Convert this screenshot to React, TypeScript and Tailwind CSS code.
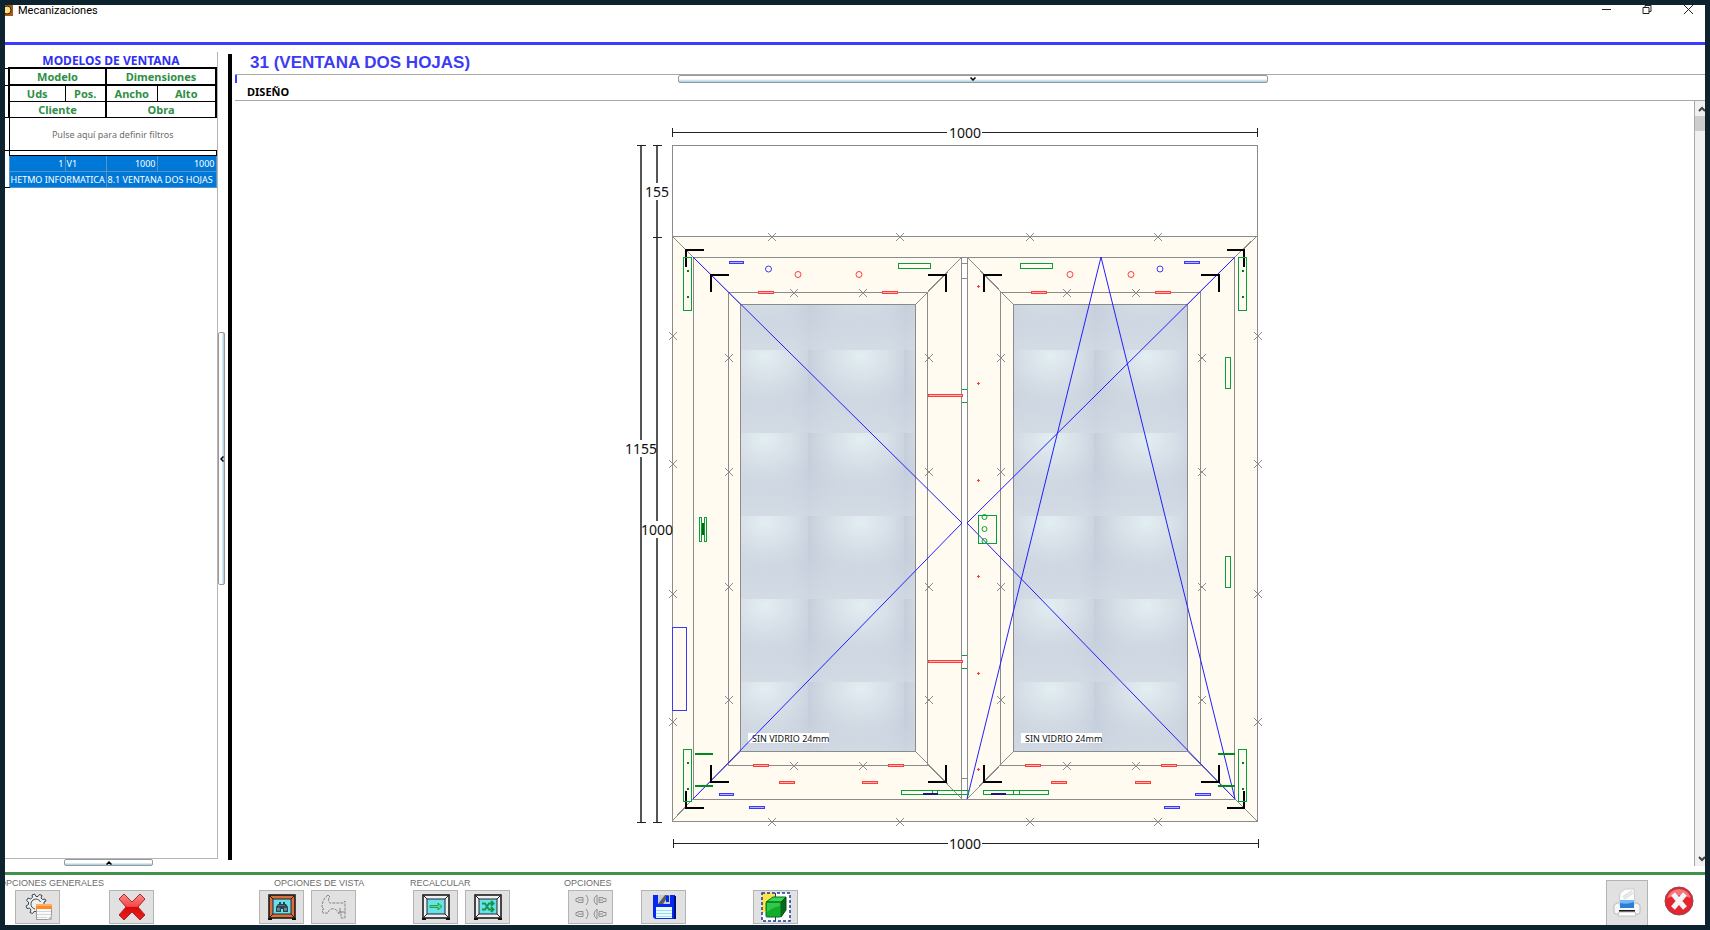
import type { ReactNode } from 'react'
import { clsx } from 'clsx'

type Point = [number, number]
type Box = [x: number, y: number, width: number, height: number]

const GREY = '#8b8b8b'
const GREEN = '#06a038'
const BLUE = '#3a3aff'
const RED = '#ff3b3b'

const crosses: Point[] = [
  // marco
  ...[772, 900, 1030, 1158].flatMap((x): Point[] => [[x, 237], [x, 822]]),
  ...[336, 464, 594, 722].flatMap((y): Point[] => [[673, y], [1258, y]]),
  // hojas
  ...[358, 472, 587, 700].flatMap((y): Point[] => [[729, y], [929, y], [1001, y], [1202, y]]),
  ...[794, 863, 1067, 1136].flatMap((x): Point[] => [[x, 293], [x, 766]]),
]

const corners = [
  'M686 267V250H704', 'M1227 250H1244V267', 'M686 791V808H704', 'M1227 808H1244V791',
  'M711 292V275H729', 'M928 275H946V292', 'M711 765V782H729', 'M928 782H946V765',
  'M984 292V275H1002', 'M1201 275H1219V292', 'M984 765V782H1002', 'M1201 782H1219V765',
]

const greenBoxes: Box[] = [
  [683, 257, 8, 53], [1238, 257, 8, 53], [683, 749, 8, 52], [1238, 749, 8, 52],
  [898, 263, 32, 5], [1020, 263, 32, 5],
  [1225, 357, 5, 31], [1225, 556, 5, 31],
  [699, 517, 2, 24], [704, 517, 2, 24],
  [978, 515, 18, 28],
  [901, 790, 67, 4], [932, 790, 5, 4],
  [983, 790, 65, 4], [1013, 790, 6, 4],
]

const redBoxes: Box[] = [
  [758, 291, 15, 2], [882, 291, 15, 2], [1031, 291, 15, 2], [1155, 291, 15, 2],
  [753, 764, 15, 2], [888, 764, 15, 2], [1025, 764, 15, 2], [1161, 764, 15, 2],
  [779, 781, 15, 2], [862, 781, 15, 2], [1051, 781, 15, 2], [1135, 781, 15, 2],
  [928, 394, 34, 2], [928, 660, 34, 2],
]

const blueBoxes: Box[] = [
  [729, 261, 14, 2], [1184, 261, 15, 2],
  [719, 793, 14, 2], [1195, 793, 15, 2],
  [749, 806, 15, 2], [1164, 806, 15, 2],
]

const hojas = [
  { id: 'izq', x: 693, right: 962, innerX: 728, innerRight: 928, glassX: 740, glassRight: 916, labelX: 748 },
  { id: 'der', x: 967, right: 1235, innerX: 1000, innerRight: 1201, glassX: 1013, glassRight: 1188, labelX: 1021 },
]

function Boxes({ items, stroke, fill = 'none' }: { items: Box[]; stroke: string; fill?: string }) {
  return (
    <g fill={fill} stroke={stroke} strokeWidth="1">
      {items.map(([x, y, width, height]) => (
        <rect key={`${x}-${y}`} x={x + 0.5} y={y + 0.5} width={width} height={height} />
      ))}
    </g>
  )
}

function Vidrio({ id, x }: { id: string; x: number }) {
  return (
    <pattern id={id} x={x} y="350" width="96" height="83" patternUnits="userSpaceOnUse">
      <rect width="96" height="83" fill="#d2dae4" />
      <rect width="96" height="83" fill="url(#sombra)" />
      <rect width="96" height="83" fill="url(#tinte)" />
      <rect width="96" height="83" fill="url(#brillo)" />
    </pattern>
  )
}

function Plano() {
  return (
    <svg
      viewBox="621 101 688 764"
      className="h-[764px] w-[688px] shrink-0"
      shapeRendering="crispEdges"
      role="img"
      aria-label="Plano de la ventana de dos hojas"
    >
      <defs>
        <linearGradient id="sombra">
          <stop offset="0" stopColor="#b8c3d3" stopOpacity="0.6" />
          <stop offset="0.35" stopColor="#d2d9e3" stopOpacity="0" />
          <stop offset="0.75" stopColor="#d2d9e3" stopOpacity="0" />
          <stop offset="1" stopColor="#c0cbd9" stopOpacity="0.7" />
        </linearGradient>
        <linearGradient id="tinte" x2="0" y2="1">
          <stop offset="0" stopColor="#bcc7d6" stopOpacity="0.4" />
          <stop offset="1" stopColor="#d4dbe5" stopOpacity="0.7" />
        </linearGradient>
        <radialGradient id="brillo" cx="0.55" cy="0.08" r="0.65">
          <stop offset="0" stopColor="#e2eff2" />
          <stop offset="0.4" stopColor="#dde4eb" stopOpacity="0.8" />
          <stop offset="1" stopColor="#d3dae4" stopOpacity="0" />
        </radialGradient>
        <Vidrio id="vidrio-izq" x={808} />
        <Vidrio id="vidrio-der" x={1094} />
      </defs>

      {/* Cajón de persiana y marco */}
      <rect x="672.5" y="145.5" width="585" height="91" fill="#fff" stroke={GREY} />
      <rect x="672.5" y="236.5" width="585" height="585" fill="#fffbf0" stroke={GREY} />
      <path d="M672 236L693 257M1257 236L1235 257M672 821L693 799M1257 821L1235 799" stroke={GREY} />
      <path d="M693 257.5H1235M693 799.5H1235" stroke={GREY} />
      <rect x="962" y="258" width="5" height="541" fill="#fff" />
      <path d="M962 263.5H967M962 278.5H967M962 778.5H967" stroke={GREY} />

      {/* Hojas */}
      {hojas.map((h) => (
        <g key={h.id} stroke={GREY} fill="none">
          <rect x={h.x + 0.5} y="257.5" width={h.right - h.x - 1} height="542" />
          <path
            d={`M${h.x} 257L${h.glassX} 304M${h.right} 257L${h.glassRight} 304M${h.x} 799L${h.glassX} 752M${h.right} 799L${h.glassRight} 752`}
          />
          <rect x={h.innerX + 0.5} y="292.5" width={h.innerRight - h.innerX - 1} height="473" />
          <rect
            x={h.glassX + 0.5}
            y="304.5"
            width={h.glassRight - h.glassX - 1}
            height="447"
            fill={`url(#vidrio-${h.id})`}
          />
          <rect x={h.labelX} y="733" width="81" height="10" fill="#fff" stroke="none" />
          <text x={h.labelX + 4} y="742" fill="#111" stroke="none" className="font-['Noto_Sans',sans-serif] text-[9px]">
            SIN VIDRIO 24mm
          </text>
        </g>
      ))}

      {/* Sentido de apertura */}
      <g fill="none" stroke="#2020ff" shapeRendering="auto">
        <path d="M693 257L962 523L693 799" />
        <path d="M1235 257L967 523L1235 799" />
        <path d="M967 799L1101 257L1235 799" />
      </g>

      {/* Mecanizados */}
      <path d={crosses.map(([x, y]) => `M${x - 4} ${y - 4}l8 8m0 -8l-8 8`).join('')} stroke={GREY} shapeRendering="auto" />
      <path d={corners.join('')} stroke="#000" strokeWidth="2" fill="none" />
      <Boxes items={greenBoxes} stroke={GREEN} />
      <Boxes items={redBoxes} stroke={RED} fill="#ffb4b0" />
      <Boxes items={blueBoxes} stroke={BLUE} fill="#b4b4ff" />
      <rect x="672.5" y="627.5" width="14" height="83" fill="none" stroke={BLUE} />
      <path d="M695 754H713M695 786H713M1218 754H1235M1218 786H1235" stroke="#008a1c" strokeWidth="2" />
      <path d="M962 389.5H967M962 402.5H967M962 655.5H967M962 668.5H967" stroke={GREEN} />
      <path d="M703 523V535" stroke="#006a10" strokeWidth="2" />
      <path d="M923 794H938M991 794H1006" stroke="#18187c" strokeWidth="2" />
      <g fill="#007a20">
        {[687, 1242].flatMap((x) =>
          [270, 296, 762, 788].map((y) => <rect key={`${x}-${y}`} x={x} y={y} width="2" height="2" />),
        )}
      </g>
      <g fill={RED}>
        {[286, 383, 480, 576, 673, 769].map((y) => (
          <path key={y} d={`M977 ${y}h3v1h-3zM978 ${y - 1}h1v3h-1z`} />
        ))}
      </g>
      <g fill="none" shapeRendering="auto">
        <g stroke={RED}>
          {[798, 859, 1070, 1131].map((x) => (
            <circle key={x} cx={x} cy="274.5" r="3" />
          ))}
        </g>
        <g stroke={BLUE}>
          <circle cx="768.5" cy="269" r="3" />
          <circle cx="1160" cy="269" r="3" />
        </g>
        <g stroke={GREEN}>
          {[517, 529, 541].map((y) => (
            <circle key={y} cx="984.5" cy={y} r="2.5" />
          ))}
        </g>
      </g>

      {/* Cotas */}
      <g stroke="#222">
        <path d="M672 132.5H947M982 132.5H1257M672.5 128V137M1257.5 128V137" />
        <path d="M673 843.5H948M982 843.5H1258M673.5 839V848M1258.5 839V848" />
        <path d="M641 145V440M641 457V822M657 145V183M657 200V521M657 538V822" stroke="#555" strokeWidth="2" />
        <path d="M637 145.5H646M637 822.5H646M653 145.5H662M653 237.5H662M653 822.5H662" />
      </g>
      <g fill="#111" textAnchor="middle" className="font-['Noto_Sans',sans-serif] text-[14px]">
        <text x="965" y="138">1000</text>
        <text x="965" y="849">1000</text>
        <text x="657" y="197">155</text>
        <text x="641" y="454">1155</text>
        <text x="657" y="535">1000</text>
      </g>
    </svg>
  )
}

/* Iconos de la barra inferior */

function ConfigIcon() {
  return (
    <svg viewBox="0 0 28 28" className="size-[28px]">
      <g transform="translate(12 11)" fill="none" stroke="#3d4448">
        <path d="M8 0V-2L10 -3L9 -5L6.500 -4.500L5 -6L6 -8.500L3.500 -9.500L2 -7.500H0L-1.500 -10L-4 -9L-3.500 -6.500L-5.500 -5L-8 -6L-9.500 -3.500L-7.500 -2V0.500L-10 2L-9 4.500L-6.500 4L-5 6L-6 8.500L-3.500 9.500L-2 7.500H0" fill="#eef0f1" />
        <path d="M4.500 -2A5 5 0 1 0 -1 5" />
      </g>
      <rect x="12.500" y="11.500" width="15" height="15" fill="#fafafa" stroke="#999" />
      <rect x="12" y="11" width="16" height="5" fill="#ff8b28" />
      <rect x="12" y="11" width="16" height="2" fill="#ffb066" />
      <path d="M13 18.500H27M13 21.500H27M13 24.500H23" stroke="#d5d5d5" />
      <path d="M23 27L28 22V27Z" fill="#b8b8b8" />
    </svg>
  )
}

function DeleteIcon() {
  return (
    <svg viewBox="0 0 28 28" className="size-[28px]">
      <defs>
        <linearGradient id="rojo" x2="0" y2="1">
          <stop offset="0" stopColor="#ff8a8a" />
          <stop offset="0.480" stopColor="#f04848" />
          <stop offset="0.500" stopColor="#d80808" />
          <stop offset="1" stopColor="#f02020" />
        </linearGradient>
      </defs>
      <path d="M6 1L14 9L22 1L27 6L20 14L27 22L22 27L14 19L6 27L1 22L8 14L1 6Z" fill="url(#rojo)" stroke="#a32a2a" strokeLinejoin="round" />
    </svg>
  )
}

function WindowFrame({ color, children }: { color: string; children: ReactNode }) {
  return (
    <svg viewBox="0 0 28 26" className="h-[26px] w-[28px]">
      <rect x="1" y="1" width="26" height="23" fill={color} stroke="#111" strokeWidth="1.500" />
      <path d="M1 1L5 5M27 1L23 5M1 24L5 20M27 24L23 20" stroke="#222" />
      <rect x="5" y="5" width="18" height="15" fill="#68e2ea" stroke="#223" />
      <path d="M0 25H4M24 25H28" stroke="#111" strokeWidth="2" />
      {children}
    </svg>
  )
}

function FindIcon() {
  return (
    <WindowFrame color="#d9703c">
      <path d="M8 13L10 10H11V8H13V10H15V8H17V10H18L20 13V18H15V15H13V18H8Z" fill="#2d4450" />
      <path d="M9.500 14H11.500V16.500H9.500ZM16.500 14H18.500V16.500H16.500ZM10 11.500H17" fill="#5b8790" stroke="#7caab1" strokeWidth="0.500" />
    </WindowFrame>
  )
}

function ArrowIcon() {
  return (
    <WindowFrame color="#f0f0f0">
      <path d="M8 11.500H16V9L20 12.500L16 16V13.500H8Z" fill="#55dd70" stroke="#168a38" strokeWidth="0.750" />
    </WindowFrame>
  )
}

function ShuffleIcon() {
  return (
    <WindowFrame color="#f0f0f0">
      <g fill="none" stroke="#15964a" strokeWidth="2">
        <path d="M8 9.500H11L15 15.500H19M8 15.500H11L15 9.500H19" />
        <path d="M17 7L19.500 9.500L17 12M17 13L19.500 15.500L17 18" />
      </g>
    </WindowFrame>
  )
}

function ProfileIcon() {
  return (
    <svg viewBox="0 0 26 26" className="size-[26px]" fill="none" stroke="#858585">
      <path d="M7 1C3 4 1 8 1 13L3 15L1 16L2 19H7C8 14 14 13 17 18L18 20V18H20V24H24V7L22 9H9C7 8 7 4 9 3Z" strokeDasharray="3 1" />
      <path d="M19 14V18H24" />
    </svg>
  )
}

function ScrewsIcon() {
  return (
    <svg viewBox="0 0 32 26" className="h-[26px] w-[32px]" fill="none" stroke="#909090">
      {[6, 20].map((y) => (
        <g key={y}>
          <path d={`M1 ${y - 1.5}H3V${y - 2.5}H8V${y + 2.5}H3V${y + 1.5}H1ZM3 ${y}H8M11 ${y - 5}Q15 ${y} 11 ${y + 5}`} />
          <path d={`M31 ${y - 1.5}H28V${y - 2.5}H24V${y + 2.5}H28V${y + 1.5}H31ZM24 ${y}H28M22 ${y - 5}Q16 ${y} 22 ${y + 5}M22 ${y - 5}V${y + 5}`} />
        </g>
      ))}
    </svg>
  )
}

function SaveIcon() {
  return (
    <svg viewBox="0 0 24 24" className="size-[24px]">
      <path d="M1 0H23V24H3L1 22Z" fill="#0828ee" />
      <path d="M23 1V24" stroke="#001078" strokeWidth="2" />
      <rect x="6" y="0" width="12" height="9" fill="#c8ccd2" />
      <path d="M6 9L13 0H17L11 9Z" fill="#555b66" />
      <rect x="14" y="1" width="3" height="6" fill="#0828ee" />
      <rect x="4" y="12" width="16" height="11" fill="#e8fbff" />
      <path d="M4 15.500H20M4 18.500H20M4 21.500H20" stroke="#9fdcf2" />
    </svg>
  )
}

function CubeIcon() {
  return (
    <svg viewBox="0 0 30 30" className="size-[30px]">
      <rect x="1" y="1" width="28" height="28" fill="#fff" />
      <path d="M1 1H14V10L1 22Z" fill="#ffe34a" />
      <rect x="1" y="1" width="28" height="28" fill="none" stroke="#1d3a96" strokeWidth="1.500" strokeDasharray="3 2" />
      <path d="M14.500 1V29" stroke="#1d3a96" />
      <path d="M5 10L12 5H25L20 10Z" fill="#35d955" stroke="#087020" />
      <path d="M20 10L25 5V18L20 25Z" fill="#066a1c" stroke="#065018" />
      <rect x="5" y="10" width="15" height="15" rx="1" fill="#0fae2b" stroke="#087020" />
      <path d="M6 11H19V14Q12 15 6 20Z" fill="#4ad865" opacity="0.6" />
    </svg>
  )
}

function PrinterIcon() {
  return (
    <svg viewBox="0 0 30 30" className="size-[30px]">
      <path d="M2 17L5 15H25L28 17V24Q28 26 26 26H4Q2 26 2 24Z" fill="#f7f7f7" stroke="#bbb" />
      <path d="M7 16L8 5L13 1H22L23 16Z" fill="#fcfcfc" stroke="#ccc" />
      <path d="M11 9L20 3M12 11L21 5" stroke="#e2e2e2" strokeWidth="2" />
      <rect x="8" y="12" width="14" height="8" fill="#2c7edb" />
      <path d="M8 12H22V14Q15 17 8 15Z" fill="#74b7f2" />
      <path d="M7 23H23" stroke="#1a1a1a" strokeWidth="2" />
      <path d="M7 24H23L24 28H6Z" fill="#fff" stroke="#c2c2c2" />
    </svg>
  )
}

function ExitIcon() {
  return (
    <svg viewBox="0 0 30 30" className="size-[30px]">
      <circle cx="15" cy="15" r="14" fill="#e62430" stroke="#8c4a4c" />
      <path d="M3 12A12.500 12.500 0 0 1 27 12Q15 7 3 12Z" fill="#f58d92" opacity="0.8" />
      <path d="M9 8L21 22M21 8L9 22" stroke="#f5f5f5" strokeWidth="5" />
    </svg>
  )
}

function ToolButton({ label, children }: { label: string; children: ReactNode }) {
  return (
    <button
      type="button"
      aria-label={label}
      className="flex h-[34px] w-[45px] items-center justify-center border border-[#b4b4b4] bg-[#e1e1e1]"
    >
      {children}
    </button>
  )
}

function ToolGroup({ title, className, rowClassName, children }: {
  title: string
  className?: string
  rowClassName: string
  children: ReactNode
}) {
  return (
    <section className={clsx('flex flex-col pt-[1px]', className)}>
      <h2 className="whitespace-nowrap font-['Liberation_Sans',sans-serif] text-[9px] leading-[14px] text-[#6b6b6b]">
        {title}
      </h2>
      <div className={clsx('flex', rowClassName)}>{children}</div>
    </section>
  )
}

function Toolbar() {
  return (
    <footer className="flex h-[53px] shrink-0 overflow-hidden border-t-[3px] border-[#43924a]">
      <ToolGroup title="OPCIONES GENERALES" className="-ml-[6px] w-[261px]" rowClassName="gap-[49px] pl-[16px]">
        <ToolButton label="Configuración"><ConfigIcon /></ToolButton>
        <ToolButton label="Eliminar"><DeleteIcon /></ToolButton>
      </ToolGroup>
      <ToolGroup title="OPCIONES DE VISTA" className="w-[150px] pl-[14px]" rowClassName="-ml-[15px] gap-[7px]">
        <ToolButton label="Ver ventana"><FindIcon /></ToolButton>
        <ToolButton label="Ver perfil"><ProfileIcon /></ToolButton>
      </ToolGroup>
      <ToolGroup title="RECALCULAR" className="w-[154px]" rowClassName="gap-[7px] pl-[3px]">
        <ToolButton label="Recalcular"><ArrowIcon /></ToolButton>
        <ToolButton label="Recalcular todo"><ShuffleIcon /></ToolButton>
      </ToolGroup>
      <ToolGroup title="OPCIONES" rowClassName="pl-[4px]">
        <ToolButton label="Tornillos"><ScrewsIcon /></ToolButton>
        <div className="ml-[28px]"><ToolButton label="Guardar"><SaveIcon /></ToolButton></div>
        <div className="ml-[67px]"><ToolButton label="Vista 3D"><CubeIcon /></ToolButton></div>
      </ToolGroup>
      <div className="ml-auto flex gap-[16px] pr-[11px]">
        <button
          type="button"
          aria-label="Imprimir"
          className="mt-[5px] flex h-[46px] w-[42px] items-center justify-center border border-[#b4b4b4] bg-[#e1e1e1]"
        >
          <PrinterIcon />
        </button>
        <button type="button" aria-label="Salir" className="flex items-center pt-[2px]">
          <ExitIcon />
        </button>
      </div>
    </footer>
  )
}

function TitleBar() {
  return (
    <header className="flex h-[40px] shrink-0 items-start justify-between border-b-[3px] border-[#3c3cff]">
      <div className="flex h-[11px] items-center gap-[5px]">
        <svg viewBox="0 0 8 11" className="h-[11px] w-[8px]">
          <rect width="8" height="11" fill="#a5591c" />
          <circle cx="2" cy="5" r="4" fill="#ffe27a" stroke="#3d2208" />
        </svg>
        <h1 className="font-['Roboto',sans-serif] text-[11px] leading-[11px] text-black">Mecanizaciones</h1>
      </div>
      <div className="flex gap-[7px]">
        {[
          { label: 'Minimizar', d: 'M1 4.500H10' },
          { label: 'Restaurar', d: 'M1 2.500H7V8.500H1ZM3 2V0.500H9V6.500H7' },
          { label: 'Cerrar', d: 'M1 0L10 9M10 0L1 9' },
        ].map(({ label, d }) => (
          <button key={label} type="button" aria-label={label} className="flex w-[34px] justify-center">
            <svg viewBox="0 0 11 10" className="h-[10px] w-[11px]" fill="none" stroke="#222">
              <path d={d} />
            </svg>
          </button>
        ))}
      </div>
    </header>
  )
}

function ModelTable() {
  const head = 'h-[16px] overflow-hidden border border-black p-0 text-center text-[11px] font-bold text-[#2f8f46]'
  const data = 'h-[16px] overflow-hidden whitespace-nowrap border border-[#5a93c4] p-0 px-[1px]'

  return (
    <table className="w-full table-fixed border-collapse text-[9px] leading-[15px]">
      <colgroup>
        <col className="w-[4px]" />
        <col className="w-[56px]" />
        <col className="w-[41px]" />
        <col className="w-[51px]" />
        <col />
      </colgroup>
      <thead>
        <tr>
          <td className="border-y border-black p-0" />
          <th colSpan={2} className={clsx(head, 'border-2')}>Modelo</th>
          <th colSpan={2} className={clsx(head, 'border-2')}>Dimensiones</th>
        </tr>
        <tr>
          <td className="p-0" />
          <th className={clsx(head, 'border-l-2')}>Uds</th>
          <th className={clsx(head, 'border-r-2')}>Pos.</th>
          <th className={head}>Ancho</th>
          <th className={clsx(head, 'border-r-2')}>Alto</th>
        </tr>
        <tr>
          <td className="border-b border-black p-0" />
          <th colSpan={2} className={clsx(head, 'border-x-2')}>Cliente</th>
          <th colSpan={2} className={clsx(head, 'border-r-2')}>Obra</th>
        </tr>
      </thead>
      <tbody>
        <tr>
          <td className="border-b border-black p-0" />
          <td colSpan={4} className="h-[33px] border-b border-l border-black p-0 text-center">
            <button type="button" className="text-[#6d6d6d]">Pulse aquí para definir filtros</button>
          </td>
        </tr>
        <tr>
          <td className="p-0" />
          <td colSpan={4} className="h-[5px] border border-black p-0" />
        </tr>
        <tr className="bg-[#0078d7] text-white">
          <td className="bg-white p-0" />
          <td className={clsx(data, 'text-right')}>1</td>
          <td className={data}>V1</td>
          <td className={clsx(data, 'text-right')}>1000</td>
          <td className={clsx(data, 'text-right')}>1000</td>
        </tr>
        <tr className="bg-[#0078d7] text-white">
          <td className="border-b border-black bg-white p-0" />
          <td colSpan={2} className={data}>HETMO INFORMATICA</td>
          <td colSpan={2} className={data}>8.1 VENTANA DOS HOJAS</td>
        </tr>
      </tbody>
    </table>
  )
}

function Sidebar() {
  return (
    <aside className="flex w-[213px] shrink-0 flex-col pt-[7px]">
      <div className="flex-1 border-b border-r border-[#b5b5b5]">
        <h2 className="h-[15px] text-center text-[12px] font-bold leading-[17px] text-[#2f2ff5]">
          MODELOS DE VENTANA
        </h2>
        <ModelTable />
      </div>
      <div className="flex h-[13px] justify-center pr-[6px]">
        <button
          type="button"
          aria-label="Plegar panel inferior"
          className="flex h-[7px] w-[89px] items-center justify-center rounded-[2px] border border-[#999] bg-linear-to-b from-white from-50% to-[#9fcbe0]"
        >
          <svg viewBox="0 0 6 4" className="h-[4px] w-[6px]" fill="none" stroke="#000" strokeWidth="1.500">
            <path d="M0.500 3.500L3 1L5.500 3.500" />
          </svg>
        </button>
      </div>
    </aside>
  )
}

function Splitter() {
  return (
    <div className="flex w-[15px] shrink-0 items-center justify-between">
      <button
        type="button"
        aria-label="Plegar panel izquierdo"
        className="flex h-[253px] w-[7px] items-center justify-center rounded-[2px] border border-[#999] bg-linear-to-r from-white from-50% to-[#9fcbe0]"
      >
        <svg viewBox="0 0 4 6" className="h-[6px] w-[4px]" fill="none" stroke="#000" strokeWidth="1.500">
          <path d="M3.500 0.500L1 3L3.500 5.500" />
        </svg>
      </button>
      <div className="mr-[1px] mt-[9px] mb-[12px] w-[4px] self-stretch bg-black" />
    </div>
  )
}

function DesignPanel() {
  return (
    <main className="flex min-w-0 flex-1 flex-col pb-[6px] pl-[2px]">
      <h2 className="h-[29px] pl-[15px] pt-[5px] font-['Liberation_Sans',sans-serif] text-[17px] font-bold leading-[26px] text-[#3c3cf5]">
        31 (VENTANA DOS HOJAS)
      </h2>
      <div className="flex h-[27px] flex-col border-y border-[#a8a8a8]">
        <div className="flex h-[8px] shrink-0 justify-center border-l-2 border-[#3c3cff] pl-[4px]">
          <button
            type="button"
            aria-label="Plegar cabecera"
            className="flex h-[8px] w-[590px] items-center justify-center rounded-[2px] border border-[#999] bg-linear-to-b from-white from-50% to-[#9fcbe0]"
          >
            <svg viewBox="0 0 6 4" className="h-[4px] w-[6px]" fill="none" stroke="#000" strokeWidth="1.500">
              <path d="M0.500 0.500L3 3L5.500 0.500" />
            </svg>
          </button>
        </div>
        <h3 className="pl-[12px] text-[11px] font-bold leading-[17px] text-black">DISEÑO</h3>
      </div>
      <div className="flex flex-1">
        <div className="flex flex-1 justify-center overflow-hidden">
          <Plano />
        </div>
        <div className="flex w-[11px] shrink-0 flex-col items-end overflow-hidden border-l border-[#a8a8a8] bg-[#f0f0f0]">
          <button type="button" aria-label="Subir" className="flex h-[15px] items-center">
            <svg viewBox="0 0 7 6" className="h-[6px] w-[7px]" fill="none" stroke="#444" strokeWidth="2">
              <path d="M1 5L4 2L7 5" />
            </svg>
          </button>
          <div className="h-[15px] w-full bg-[#cdcdcd]" />
          <button type="button" aria-label="Bajar" className="mt-auto flex h-[15px] items-center">
            <svg viewBox="0 0 7 6" className="h-[6px] w-[7px]" fill="none" stroke="#444" strokeWidth="2">
              <path d="M1 1L4 4L7 1" />
            </svg>
          </button>
        </div>
      </div>
    </main>
  )
}

export default function App() {
  return (
    <div className="flex min-h-screen flex-col bg-[#0d2430] p-[5px] font-['Noto_Sans',sans-serif]">
      <div className="flex flex-1 flex-col bg-white">
        <TitleBar />
        <div className="flex flex-1">
          <Sidebar />
          <Splitter />
          <DesignPanel />
        </div>
        <Toolbar />
      </div>
    </div>
  )
}
